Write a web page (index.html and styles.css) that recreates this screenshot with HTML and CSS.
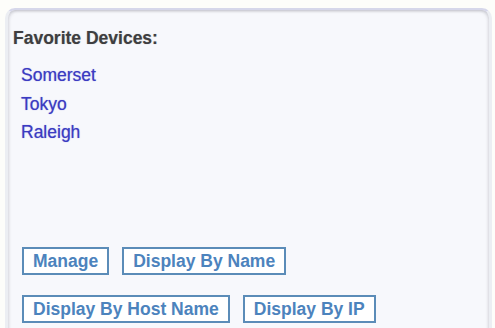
FILE: index.html
```html
<!DOCTYPE html>
<html lang="en">
<head>
    <meta charset="UTF-8">
    <meta name="viewport" content="width=device-width, initial-scale=1.0">
    <title>Favorite Devices</title>
    <link rel="stylesheet" href="styles.css">
</head>
<body>
    <div class="panel">
        <h3>Favorite Devices:</h3>
        <ul class="device-list">
            <li><a href="#">Somerset</a></li>
            <li><a href="#">Tokyo</a></li>
            <li><a href="#">Raleigh</a></li>
        </ul>

        <div class="actions">
            <div class="button-row">
                <button type="button">Manage</button>
                <button type="button">Display By Name</button>
            </div>
            <div class="button-row">
                <button type="button">Display By Host Name</button>
                <button type="button">Display By IP</button>
            </div>
        </div>
    </div>
</body>
</html>
```

FILE: styles.css
```css
body {
    font-family: "Liberation Sans", Arial, sans-serif;
    margin: 0;
    padding: 0;
    background-color: #fdfdfa;
    height: 328px;
    overflow: hidden;
}

.panel {
    margin: 8px 0 0 5px;
    width: 487px;
    height: 320px;
    box-sizing: border-box;
    padding: 18px 5px 0 5px;
    background-color: #f7f8fc;
    border-top: 2px solid #d6d7ea;
    border-left: 3px solid #eceef3;
    border-right: 3px solid #eceef3;
    border-radius: 10px 10px 0 0;
    box-shadow: inset 2px 2px 3px -1px rgba(150, 150, 160, 0.35), inset -2px 2px 3px -1px rgba(150, 150, 160, 0.35);
    display: flex;
    flex-direction: column;
}

h3 {
    margin: 0;
    font-size: 17.5px;
    line-height: 20px;
    font-weight: bold;
    color: #3e3e40;
    text-shadow: 0 0 1px rgba(62, 62, 64, 0.4);
}

.device-list {
    list-style: none;
    margin: 13px 0 0 0;
    padding: 0 0 0 8px;
}

.device-list li {
    font-size: 17.5px;
    line-height: 28.5px;
}

.device-list a {
    color: #3b3bc2;
    text-decoration: none;
    text-shadow: 0 0 1px rgba(59, 59, 194, 0.6);
}

.actions {
    margin: 100px 0 0 9px;
    display: flex;
    flex-direction: column;
    gap: 20px;
}

.button-row {
    display: flex;
    gap: 13px;
}

button {
    font-family: "Liberation Sans", Arial, sans-serif;
    font-size: 17.5px;
    line-height: 20px;
    font-weight: bold;
    color: #4c83bd;
    background-color: #ffffff;
    border: 2px solid #5b8cb8;
    border-radius: 0;
    padding: 2px 9px;
    cursor: pointer;
}

button:hover {
    background-color: #eef4fa;
}
```
